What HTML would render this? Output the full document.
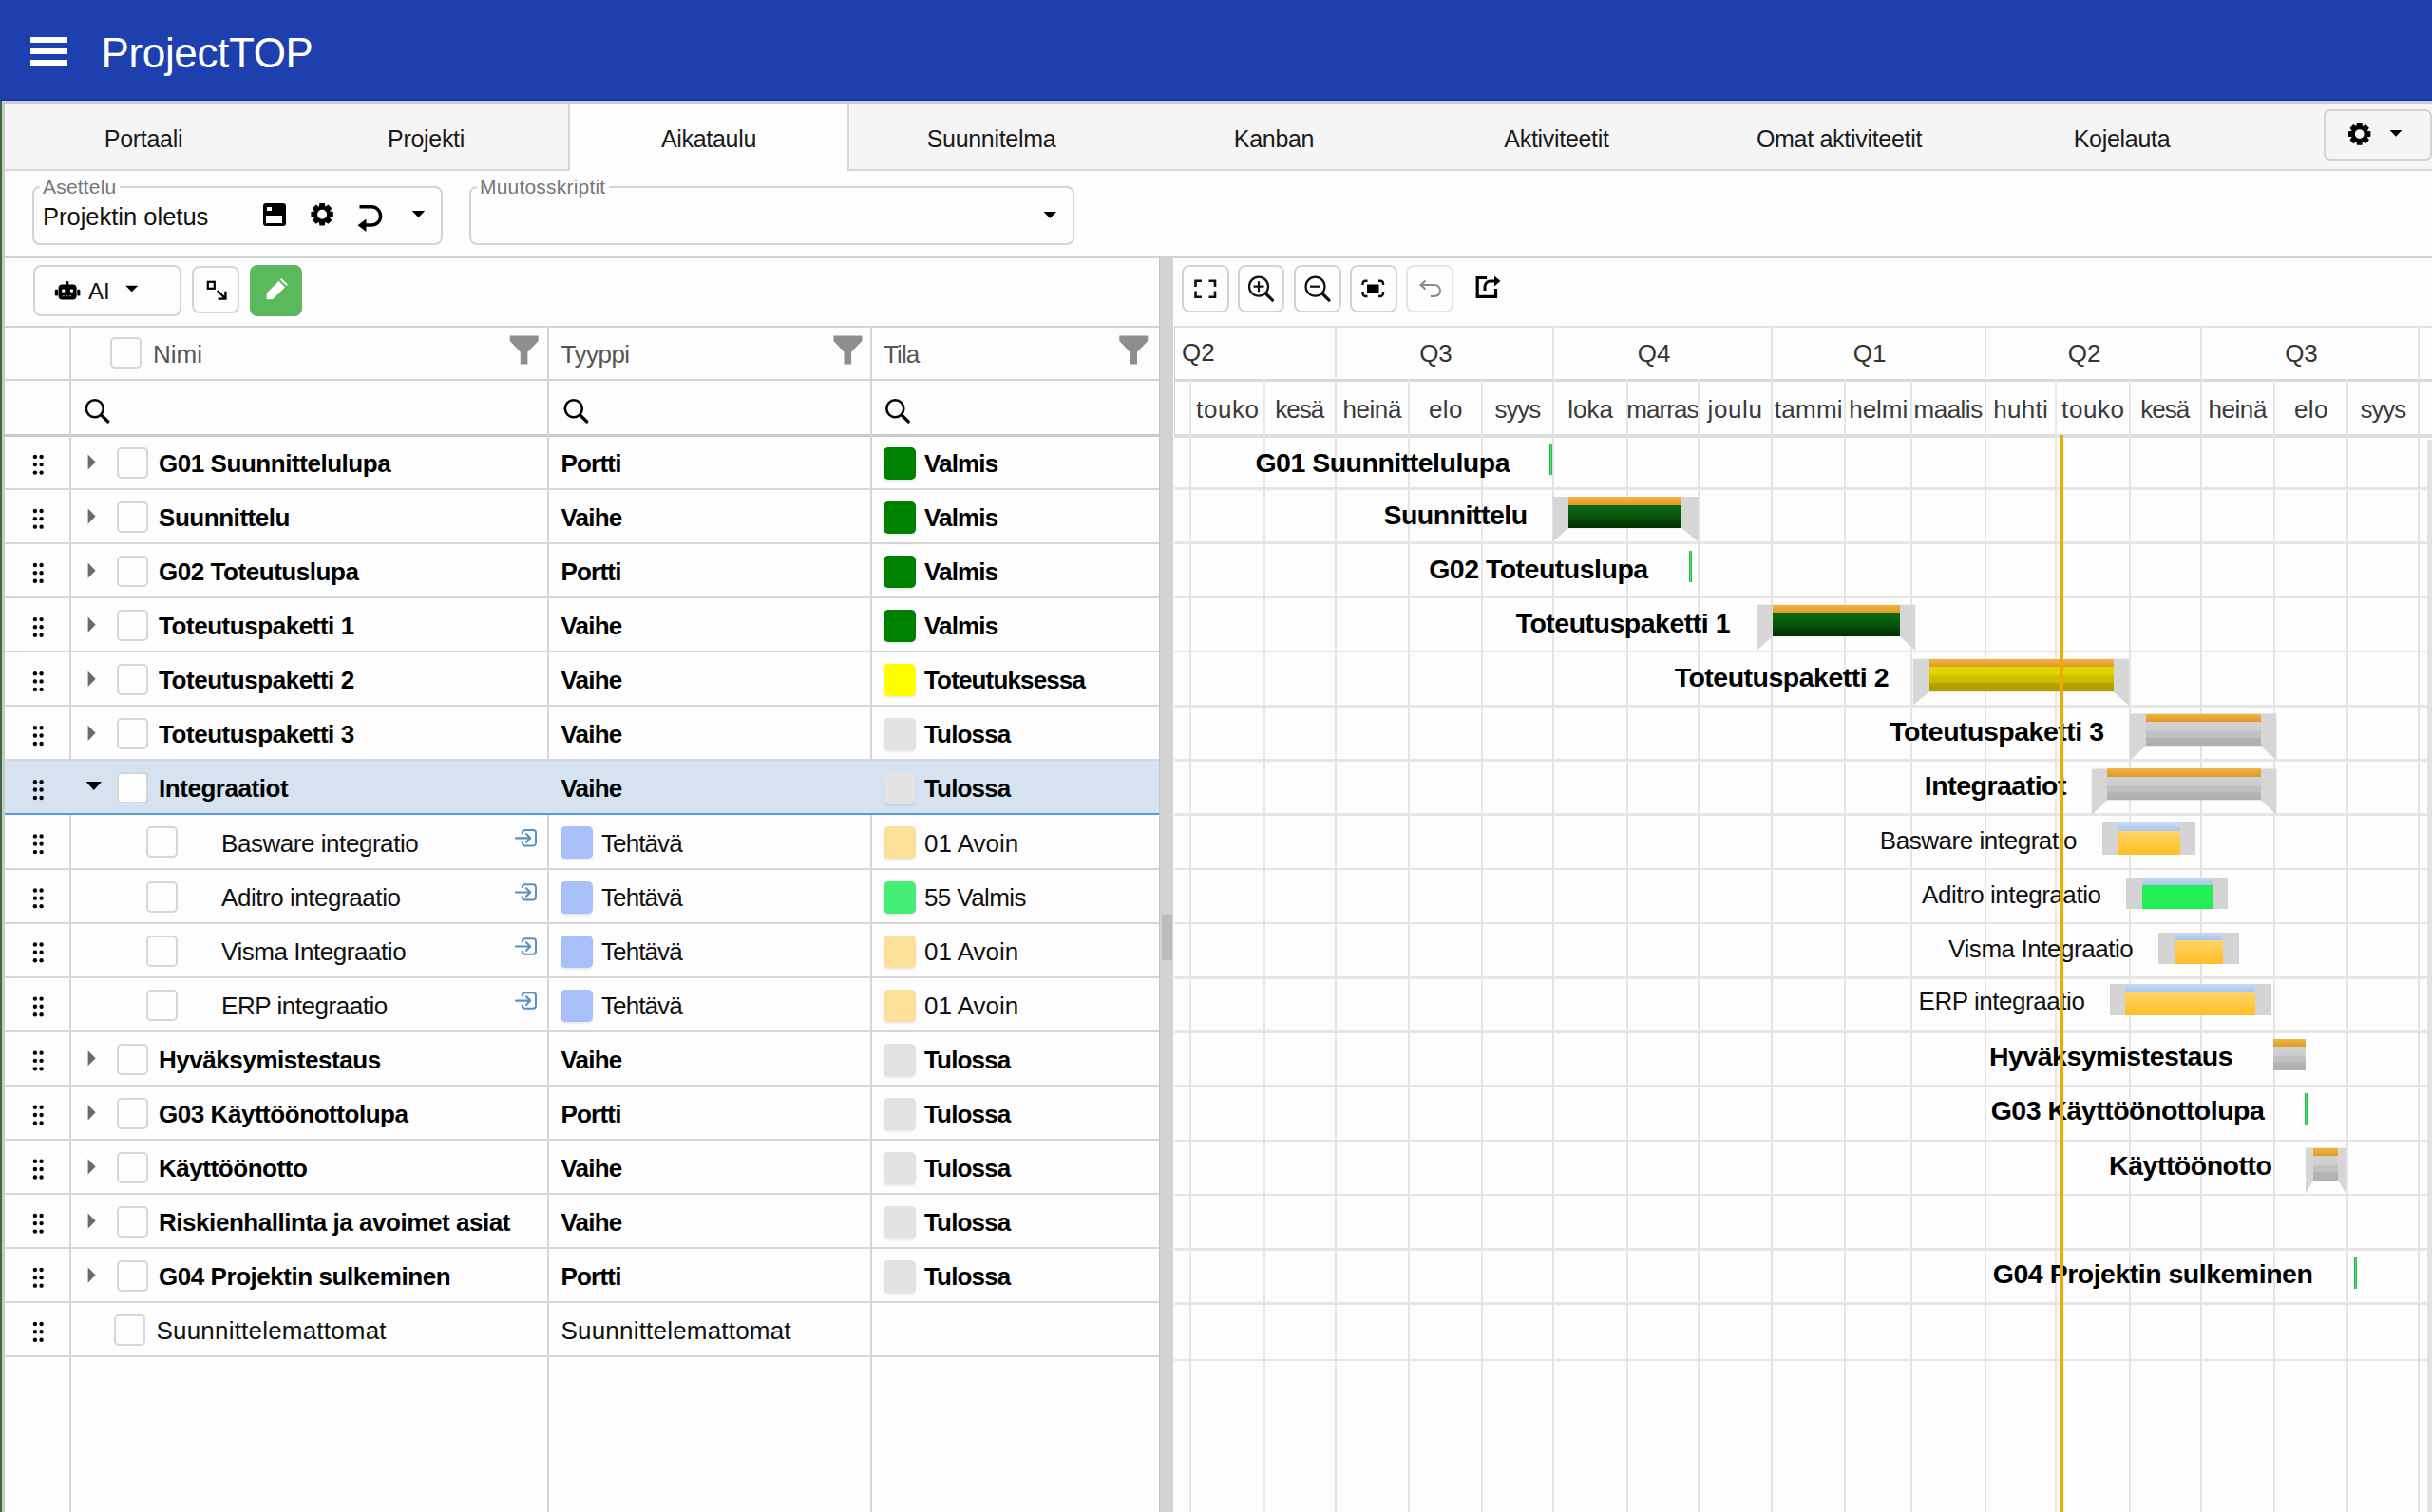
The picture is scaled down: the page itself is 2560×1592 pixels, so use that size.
<!DOCTYPE html>
<html><head><meta charset="utf-8"><title>ProjectTOP - Aikataulu</title>
<style>
html,body{margin:0;padding:0;}
body{width:2560px;height:1592px;position:relative;overflow:hidden;background:#fdfdfd;font-family:"Liberation Sans", sans-serif;}
svg{position:absolute;overflow:visible;}
</style></head><body>
<div style="position:absolute;left:0px;top:0px;width:2560px;height:106px;background:#1e40ae;"></div>
<div style="position:absolute;left:0px;top:105px;width:2560px;height:1px;background:#0b2fa6;"></div>
<div style="position:absolute;left:32px;top:39px;width:39px;height:5.5px;background:#fff;"></div>
<div style="position:absolute;left:32px;top:51px;width:39px;height:5.5px;background:#fff;"></div>
<div style="position:absolute;left:32px;top:63px;width:39px;height:5.5px;background:#fff;"></div>
<div style="position:absolute;left:106.50px;top:30.75px;font-size:44px;line-height:50.6px;font-weight:normal;color:#fff;letter-spacing:-0.35px;white-space:nowrap;">ProjectTOP</div>
<div style="position:absolute;left:0px;top:106px;width:1.5px;height:1486px;background:#3b6b42;"></div>
<div style="position:absolute;left:1.5px;top:106px;width:3px;height:1486px;background:#c9c9c9;"></div>
<div style="position:absolute;left:1.5px;top:106px;width:2560px;height:4px;background:linear-gradient(#cfcfcf,#c6c6c6);"></div>
<div style="position:absolute;left:4.5px;top:110px;width:2555.5px;height:68px;background:#f5f5f5;"></div>
<div style="position:absolute;left:4.5px;top:178px;width:2555.5px;height:2px;background:#d6d6d6;"></div>
<div style="position:absolute;left:598px;top:110px;width:296px;height:70px;background:#fdfdfd;border-left:2px solid #d6d6d6;border-right:2px solid #d6d6d6;box-sizing:border-box;"></div>
<div style="position:absolute;left:1.0px;top:131px;width:300px;text-align:center;font-size:25px;line-height:30px;color:#1a1a1a;letter-spacing:-0.3px;">Portaali</div>
<div style="position:absolute;left:298.5px;top:131px;width:300px;text-align:center;font-size:25px;line-height:30px;color:#1a1a1a;letter-spacing:-0.3px;">Projekti</div>
<div style="position:absolute;left:596.0px;top:131px;width:300px;text-align:center;font-size:25px;line-height:30px;color:#1a1a1a;letter-spacing:-0.3px;">Aikataulu</div>
<div style="position:absolute;left:893.5px;top:131px;width:300px;text-align:center;font-size:25px;line-height:30px;color:#1a1a1a;letter-spacing:-0.3px;">Suunnitelma</div>
<div style="position:absolute;left:1191.0px;top:131px;width:300px;text-align:center;font-size:25px;line-height:30px;color:#1a1a1a;letter-spacing:-0.3px;">Kanban</div>
<div style="position:absolute;left:1488.5px;top:131px;width:300px;text-align:center;font-size:25px;line-height:30px;color:#1a1a1a;letter-spacing:-0.3px;">Aktiviteetit</div>
<div style="position:absolute;left:1786.0px;top:131px;width:300px;text-align:center;font-size:25px;line-height:30px;color:#1a1a1a;letter-spacing:-0.3px;">Omat aktiviteetit</div>
<div style="position:absolute;left:2083.5px;top:131px;width:300px;text-align:center;font-size:25px;line-height:30px;color:#1a1a1a;letter-spacing:-0.3px;">Kojelauta</div>
<div style="position:absolute;left:2446px;top:115px;width:114px;height:54px;border:2px solid #d2d2d2;border-radius:7px;box-sizing:border-box;background:#f5f5f5;"></div>
<div style="position:absolute;left:34px;top:196px;width:432px;height:62px;border:2px solid #d4d4d4;border-radius:8px;box-sizing:border-box;"></div>
<div style="position:absolute;left:42px;top:190px;width:84px;height:12px;background:#fdfdfd;"></div>
<div style="position:absolute;left:45.00px;top:184.65px;font-size:21px;line-height:24.15px;font-weight:normal;color:#777;letter-spacing:0.2px;white-space:nowrap;">Asettelu</div>
<div style="position:absolute;left:45.00px;top:213.50px;font-size:25.5px;line-height:29.32px;font-weight:normal;color:#111;letter-spacing:0px;white-space:nowrap;">Projektin oletus</div>
<div style="position:absolute;left:494px;top:196px;width:637px;height:62px;border:2px solid #d4d4d4;border-radius:8px;box-sizing:border-box;"></div>
<div style="position:absolute;left:502px;top:190px;width:139px;height:12px;background:#fdfdfd;"></div>
<div style="position:absolute;left:505.00px;top:184.65px;font-size:21px;line-height:24.15px;font-weight:normal;color:#777;letter-spacing:0.2px;white-space:nowrap;">Muutosskriptit</div>
<div style="position:absolute;left:4.5px;top:270px;width:2555.5px;height:2px;background:#d4d4d4;"></div>
<div style="position:absolute;left:35px;top:278.5px;width:156px;height:54px;border:2px solid #d4d4d4;border-radius:8px;box-sizing:border-box;"></div>
<div style="position:absolute;left:93.00px;top:293.48px;font-size:24px;line-height:27.6px;font-weight:normal;color:#111;letter-spacing:0px;white-space:nowrap;">AI</div>
<div style="position:absolute;left:202px;top:280px;width:50px;height:50px;border:2px solid #d4d4d4;border-radius:8px;box-sizing:border-box;"></div>
<div style="position:absolute;left:263px;top:278.5px;width:54.5px;height:54px;background:#5cb85c;border-radius:8px;"></div>
<div style="position:absolute;left:1219.5px;top:271px;width:15px;height:1321px;background:#d3d3d3;border-left:1px solid #c4c4c4;box-sizing:border-box;"></div>
<div style="position:absolute;left:1244px;top:278.7px;width:49.5px;height:50px;border:2px solid #d4d4d4;border-radius:8px;box-sizing:border-box;"></div>
<div style="position:absolute;left:1302.7px;top:278.7px;width:49.5px;height:50px;border:2px solid #d4d4d4;border-radius:8px;box-sizing:border-box;"></div>
<div style="position:absolute;left:1362px;top:278.7px;width:49.5px;height:50px;border:2px solid #d4d4d4;border-radius:8px;box-sizing:border-box;"></div>
<div style="position:absolute;left:1421px;top:278.7px;width:49.5px;height:50px;border:2px solid #d4d4d4;border-radius:8px;box-sizing:border-box;"></div>
<div style="position:absolute;left:1480px;top:278.7px;width:49.5px;height:50px;border:2px solid #e6e6e6;border-radius:8px;box-sizing:border-box;"></div>
<div style="position:absolute;left:4.5px;top:342.5px;width:1215.0px;height:2px;background:#d4d4d4;"></div>
<div style="position:absolute;left:4.5px;top:399px;width:1215.0px;height:2px;background:#d4d4d4;"></div>
<div style="position:absolute;left:4.5px;top:457px;width:1215.0px;height:3px;background:#c9c9c9;"></div>
<div style="position:absolute;left:73px;top:343px;width:2px;height:1249px;background:#d6d6d6;"></div>
<div style="position:absolute;left:576px;top:343px;width:2px;height:1249px;background:#d6d6d6;"></div>
<div style="position:absolute;left:916px;top:343px;width:2px;height:1249px;background:#d6d6d6;"></div>
<div style="position:absolute;left:116px;top:355px;width:33px;height:33px;border:2px solid #d6d6d6;border-radius:5px;box-sizing:border-box;background:#fdfdfd;"></div>
<div style="position:absolute;left:161.00px;top:358.54px;font-size:26px;line-height:29.9px;font-weight:normal;color:#555;letter-spacing:0px;white-space:nowrap;">Nimi</div>
<div style="position:absolute;left:590.50px;top:358.54px;font-size:26px;line-height:29.9px;font-weight:normal;color:#555;letter-spacing:-0.5px;white-space:nowrap;">Tyyppi</div>
<div style="position:absolute;left:930.00px;top:358.54px;font-size:26px;line-height:29.9px;font-weight:normal;color:#555;letter-spacing:-0.9px;white-space:nowrap;">Tila</div>
<div style="position:absolute;left:4.5px;top:514.07px;width:1215.0px;height:2px;background:#d6d6d6;"></div>
<div style="position:absolute;left:123px;top:471.0px;width:33px;height:33px;border:2px solid #d6d6d6;border-radius:5px;box-sizing:border-box;background:#fdfdfd;"></div>
<div style="position:absolute;left:167.00px;top:474.04px;font-size:26px;line-height:29.9px;font-weight:bold;color:#000;letter-spacing:-0.45px;white-space:nowrap;">G01 Suunnittelulupa</div>
<div style="position:absolute;left:590.50px;top:474.04px;font-size:26px;line-height:29.9px;font-weight:bold;color:#000;letter-spacing:-0.8px;white-space:nowrap;">Portti</div>
<div style="position:absolute;left:930px;top:471.0px;width:34px;height:34px;background:#008000;border-radius:5px;box-shadow:0 2px 2px rgba(0,0,0,0.08);"></div>
<div style="position:absolute;left:973.00px;top:474.04px;font-size:26px;line-height:29.9px;font-weight:bold;color:#000;letter-spacing:-0.85px;white-space:nowrap;">Valmis</div>
<div style="position:absolute;left:4.5px;top:571.1400000000001px;width:1215.0px;height:2px;background:#d6d6d6;"></div>
<div style="position:absolute;left:123px;top:528.07px;width:33px;height:33px;border:2px solid #d6d6d6;border-radius:5px;box-sizing:border-box;background:#fdfdfd;"></div>
<div style="position:absolute;left:167.00px;top:531.11px;font-size:26px;line-height:29.9px;font-weight:bold;color:#000;letter-spacing:-0.45px;white-space:nowrap;">Suunnittelu</div>
<div style="position:absolute;left:590.50px;top:531.11px;font-size:26px;line-height:29.9px;font-weight:bold;color:#000;letter-spacing:-0.8px;white-space:nowrap;">Vaihe</div>
<div style="position:absolute;left:930px;top:528.07px;width:34px;height:34px;background:#008000;border-radius:5px;box-shadow:0 2px 2px rgba(0,0,0,0.08);"></div>
<div style="position:absolute;left:973.00px;top:531.11px;font-size:26px;line-height:29.9px;font-weight:bold;color:#000;letter-spacing:-0.85px;white-space:nowrap;">Valmis</div>
<div style="position:absolute;left:4.5px;top:628.21px;width:1215.0px;height:2px;background:#d6d6d6;"></div>
<div style="position:absolute;left:123px;top:585.14px;width:33px;height:33px;border:2px solid #d6d6d6;border-radius:5px;box-sizing:border-box;background:#fdfdfd;"></div>
<div style="position:absolute;left:167.00px;top:588.18px;font-size:26px;line-height:29.9px;font-weight:bold;color:#000;letter-spacing:-0.45px;white-space:nowrap;">G02 Toteutuslupa</div>
<div style="position:absolute;left:590.50px;top:588.18px;font-size:26px;line-height:29.9px;font-weight:bold;color:#000;letter-spacing:-0.8px;white-space:nowrap;">Portti</div>
<div style="position:absolute;left:930px;top:585.14px;width:34px;height:34px;background:#008000;border-radius:5px;box-shadow:0 2px 2px rgba(0,0,0,0.08);"></div>
<div style="position:absolute;left:973.00px;top:588.18px;font-size:26px;line-height:29.9px;font-weight:bold;color:#000;letter-spacing:-0.85px;white-space:nowrap;">Valmis</div>
<div style="position:absolute;left:4.5px;top:685.2800000000001px;width:1215.0px;height:2px;background:#d6d6d6;"></div>
<div style="position:absolute;left:123px;top:642.21px;width:33px;height:33px;border:2px solid #d6d6d6;border-radius:5px;box-sizing:border-box;background:#fdfdfd;"></div>
<div style="position:absolute;left:167.00px;top:645.25px;font-size:26px;line-height:29.9px;font-weight:bold;color:#000;letter-spacing:-0.45px;white-space:nowrap;">Toteutuspaketti 1</div>
<div style="position:absolute;left:590.50px;top:645.25px;font-size:26px;line-height:29.9px;font-weight:bold;color:#000;letter-spacing:-0.8px;white-space:nowrap;">Vaihe</div>
<div style="position:absolute;left:930px;top:642.21px;width:34px;height:34px;background:#008000;border-radius:5px;box-shadow:0 2px 2px rgba(0,0,0,0.08);"></div>
<div style="position:absolute;left:973.00px;top:645.25px;font-size:26px;line-height:29.9px;font-weight:bold;color:#000;letter-spacing:-0.85px;white-space:nowrap;">Valmis</div>
<div style="position:absolute;left:4.5px;top:742.35px;width:1215.0px;height:2px;background:#d6d6d6;"></div>
<div style="position:absolute;left:123px;top:699.28px;width:33px;height:33px;border:2px solid #d6d6d6;border-radius:5px;box-sizing:border-box;background:#fdfdfd;"></div>
<div style="position:absolute;left:167.00px;top:702.32px;font-size:26px;line-height:29.9px;font-weight:bold;color:#000;letter-spacing:-0.45px;white-space:nowrap;">Toteutuspaketti 2</div>
<div style="position:absolute;left:590.50px;top:702.32px;font-size:26px;line-height:29.9px;font-weight:bold;color:#000;letter-spacing:-0.8px;white-space:nowrap;">Vaihe</div>
<div style="position:absolute;left:930px;top:699.28px;width:34px;height:34px;background:#ffff00;border-radius:5px;box-shadow:0 2px 2px rgba(0,0,0,0.08);"></div>
<div style="position:absolute;left:973.00px;top:702.32px;font-size:26px;line-height:29.9px;font-weight:bold;color:#000;letter-spacing:-0.85px;white-space:nowrap;">Toteutuksessa</div>
<div style="position:absolute;left:4.5px;top:799.4200000000001px;width:1215.0px;height:2px;background:#d6d6d6;"></div>
<div style="position:absolute;left:123px;top:756.35px;width:33px;height:33px;border:2px solid #d6d6d6;border-radius:5px;box-sizing:border-box;background:#fdfdfd;"></div>
<div style="position:absolute;left:167.00px;top:759.39px;font-size:26px;line-height:29.9px;font-weight:bold;color:#000;letter-spacing:-0.45px;white-space:nowrap;">Toteutuspaketti 3</div>
<div style="position:absolute;left:590.50px;top:759.39px;font-size:26px;line-height:29.9px;font-weight:bold;color:#000;letter-spacing:-0.8px;white-space:nowrap;">Vaihe</div>
<div style="position:absolute;left:930px;top:756.35px;width:34px;height:34px;background:#e2e2e2;border-radius:5px;box-shadow:0 2px 2px rgba(0,0,0,0.08);"></div>
<div style="position:absolute;left:973.00px;top:759.39px;font-size:26px;line-height:29.9px;font-weight:bold;color:#000;letter-spacing:-0.85px;white-space:nowrap;">Tulossa</div>
<div style="position:absolute;left:4.5px;top:801.4200000000001px;width:1215.0px;height:56.07px;background:#d5e3f1;"></div>
<div style="position:absolute;left:4.5px;top:856.4900000000001px;width:1215.0px;height:2px;background:#5b9bd5;"></div>
<div style="position:absolute;left:123px;top:813.4200000000001px;width:33px;height:33px;border:2px solid #d6d6d6;border-radius:5px;box-sizing:border-box;background:#fdfdfd;"></div>
<div style="position:absolute;left:167.00px;top:816.46px;font-size:26px;line-height:29.9px;font-weight:bold;color:#000;letter-spacing:-0.45px;white-space:nowrap;">Integraatiot</div>
<div style="position:absolute;left:590.50px;top:816.46px;font-size:26px;line-height:29.9px;font-weight:bold;color:#000;letter-spacing:-0.8px;white-space:nowrap;">Vaihe</div>
<div style="position:absolute;left:930px;top:813.4200000000001px;width:34px;height:34px;background:#e2e2e2;border-radius:5px;box-shadow:0 2px 2px rgba(0,0,0,0.08);"></div>
<div style="position:absolute;left:973.00px;top:816.46px;font-size:26px;line-height:29.9px;font-weight:bold;color:#000;letter-spacing:-0.85px;white-space:nowrap;">Tulossa</div>
<div style="position:absolute;left:4.5px;top:913.5600000000001px;width:1215.0px;height:2px;background:#d6d6d6;"></div>
<div style="position:absolute;left:154px;top:870.49px;width:33px;height:33px;border:2px solid #d6d6d6;border-radius:5px;box-sizing:border-box;background:#fdfdfd;"></div>
<div style="position:absolute;left:233.00px;top:873.53px;font-size:26px;line-height:29.9px;font-weight:normal;color:#111;letter-spacing:-0.45px;white-space:nowrap;">Basware integratio</div>
<div style="position:absolute;left:590px;top:870.49px;width:34px;height:34px;background:#a8bffa;border-radius:5px;box-shadow:0 2px 2px rgba(0,0,0,0.08);"></div>
<div style="position:absolute;left:633.00px;top:873.53px;font-size:26px;line-height:29.9px;font-weight:normal;color:#111;letter-spacing:-0.9px;white-space:nowrap;">Tehtävä</div>
<div style="position:absolute;left:930px;top:870.49px;width:34px;height:34px;background:#fce09a;border-radius:5px;box-shadow:0 2px 2px rgba(0,0,0,0.08);"></div>
<div style="position:absolute;left:973.00px;top:873.53px;font-size:26px;line-height:29.9px;font-weight:normal;color:#111;letter-spacing:0px;white-space:nowrap;">01 Avoin</div>
<div style="position:absolute;left:4.5px;top:970.63px;width:1215.0px;height:2px;background:#d6d6d6;"></div>
<div style="position:absolute;left:154px;top:927.56px;width:33px;height:33px;border:2px solid #d6d6d6;border-radius:5px;box-sizing:border-box;background:#fdfdfd;"></div>
<div style="position:absolute;left:233.00px;top:930.60px;font-size:26px;line-height:29.9px;font-weight:normal;color:#111;letter-spacing:-0.45px;white-space:nowrap;">Aditro integraatio</div>
<div style="position:absolute;left:590px;top:927.56px;width:34px;height:34px;background:#a8bffa;border-radius:5px;box-shadow:0 2px 2px rgba(0,0,0,0.08);"></div>
<div style="position:absolute;left:633.00px;top:930.60px;font-size:26px;line-height:29.9px;font-weight:normal;color:#111;letter-spacing:-0.9px;white-space:nowrap;">Tehtävä</div>
<div style="position:absolute;left:930px;top:927.56px;width:34px;height:34px;background:#44ee77;border-radius:5px;box-shadow:0 2px 2px rgba(0,0,0,0.08);"></div>
<div style="position:absolute;left:973.00px;top:930.60px;font-size:26px;line-height:29.9px;font-weight:normal;color:#111;letter-spacing:-0.6px;white-space:nowrap;">55 Valmis</div>
<div style="position:absolute;left:4.5px;top:1027.7px;width:1215.0px;height:2px;background:#d6d6d6;"></div>
<div style="position:absolute;left:154px;top:984.63px;width:33px;height:33px;border:2px solid #d6d6d6;border-radius:5px;box-sizing:border-box;background:#fdfdfd;"></div>
<div style="position:absolute;left:233.00px;top:987.67px;font-size:26px;line-height:29.9px;font-weight:normal;color:#111;letter-spacing:-0.45px;white-space:nowrap;">Visma Integraatio</div>
<div style="position:absolute;left:590px;top:984.63px;width:34px;height:34px;background:#a8bffa;border-radius:5px;box-shadow:0 2px 2px rgba(0,0,0,0.08);"></div>
<div style="position:absolute;left:633.00px;top:987.67px;font-size:26px;line-height:29.9px;font-weight:normal;color:#111;letter-spacing:-0.9px;white-space:nowrap;">Tehtävä</div>
<div style="position:absolute;left:930px;top:984.63px;width:34px;height:34px;background:#fce09a;border-radius:5px;box-shadow:0 2px 2px rgba(0,0,0,0.08);"></div>
<div style="position:absolute;left:973.00px;top:987.67px;font-size:26px;line-height:29.9px;font-weight:normal;color:#111;letter-spacing:0px;white-space:nowrap;">01 Avoin</div>
<div style="position:absolute;left:4.5px;top:1084.77px;width:1215.0px;height:2px;background:#d6d6d6;"></div>
<div style="position:absolute;left:154px;top:1041.7px;width:33px;height:33px;border:2px solid #d6d6d6;border-radius:5px;box-sizing:border-box;background:#fdfdfd;"></div>
<div style="position:absolute;left:233.00px;top:1044.74px;font-size:26px;line-height:29.9px;font-weight:normal;color:#111;letter-spacing:-0.45px;white-space:nowrap;">ERP integraatio</div>
<div style="position:absolute;left:590px;top:1041.7px;width:34px;height:34px;background:#a8bffa;border-radius:5px;box-shadow:0 2px 2px rgba(0,0,0,0.08);"></div>
<div style="position:absolute;left:633.00px;top:1044.74px;font-size:26px;line-height:29.9px;font-weight:normal;color:#111;letter-spacing:-0.9px;white-space:nowrap;">Tehtävä</div>
<div style="position:absolute;left:930px;top:1041.7px;width:34px;height:34px;background:#fce09a;border-radius:5px;box-shadow:0 2px 2px rgba(0,0,0,0.08);"></div>
<div style="position:absolute;left:973.00px;top:1044.74px;font-size:26px;line-height:29.9px;font-weight:normal;color:#111;letter-spacing:0px;white-space:nowrap;">01 Avoin</div>
<div style="position:absolute;left:4.5px;top:1141.84px;width:1215.0px;height:2px;background:#d6d6d6;"></div>
<div style="position:absolute;left:123px;top:1098.77px;width:33px;height:33px;border:2px solid #d6d6d6;border-radius:5px;box-sizing:border-box;background:#fdfdfd;"></div>
<div style="position:absolute;left:167.00px;top:1101.81px;font-size:26px;line-height:29.9px;font-weight:bold;color:#000;letter-spacing:-0.45px;white-space:nowrap;">Hyväksymistestaus</div>
<div style="position:absolute;left:590.50px;top:1101.81px;font-size:26px;line-height:29.9px;font-weight:bold;color:#000;letter-spacing:-0.8px;white-space:nowrap;">Vaihe</div>
<div style="position:absolute;left:930px;top:1098.77px;width:34px;height:34px;background:#e2e2e2;border-radius:5px;box-shadow:0 2px 2px rgba(0,0,0,0.08);"></div>
<div style="position:absolute;left:973.00px;top:1101.81px;font-size:26px;line-height:29.9px;font-weight:bold;color:#000;letter-spacing:-0.85px;white-space:nowrap;">Tulossa</div>
<div style="position:absolute;left:4.5px;top:1198.91px;width:1215.0px;height:2px;background:#d6d6d6;"></div>
<div style="position:absolute;left:123px;top:1155.8400000000001px;width:33px;height:33px;border:2px solid #d6d6d6;border-radius:5px;box-sizing:border-box;background:#fdfdfd;"></div>
<div style="position:absolute;left:167.00px;top:1158.88px;font-size:26px;line-height:29.9px;font-weight:bold;color:#000;letter-spacing:-0.45px;white-space:nowrap;">G03 Käyttöönottolupa</div>
<div style="position:absolute;left:590.50px;top:1158.88px;font-size:26px;line-height:29.9px;font-weight:bold;color:#000;letter-spacing:-0.8px;white-space:nowrap;">Portti</div>
<div style="position:absolute;left:930px;top:1155.8400000000001px;width:34px;height:34px;background:#e2e2e2;border-radius:5px;box-shadow:0 2px 2px rgba(0,0,0,0.08);"></div>
<div style="position:absolute;left:973.00px;top:1158.88px;font-size:26px;line-height:29.9px;font-weight:bold;color:#000;letter-spacing:-0.85px;white-space:nowrap;">Tulossa</div>
<div style="position:absolute;left:4.5px;top:1255.9799999999998px;width:1215.0px;height:2px;background:#d6d6d6;"></div>
<div style="position:absolute;left:123px;top:1212.9099999999999px;width:33px;height:33px;border:2px solid #d6d6d6;border-radius:5px;box-sizing:border-box;background:#fdfdfd;"></div>
<div style="position:absolute;left:167.00px;top:1215.95px;font-size:26px;line-height:29.9px;font-weight:bold;color:#000;letter-spacing:-0.45px;white-space:nowrap;">Käyttöönotto</div>
<div style="position:absolute;left:590.50px;top:1215.95px;font-size:26px;line-height:29.9px;font-weight:bold;color:#000;letter-spacing:-0.8px;white-space:nowrap;">Vaihe</div>
<div style="position:absolute;left:930px;top:1212.9099999999999px;width:34px;height:34px;background:#e2e2e2;border-radius:5px;box-shadow:0 2px 2px rgba(0,0,0,0.08);"></div>
<div style="position:absolute;left:973.00px;top:1215.95px;font-size:26px;line-height:29.9px;font-weight:bold;color:#000;letter-spacing:-0.85px;white-space:nowrap;">Tulossa</div>
<div style="position:absolute;left:4.5px;top:1313.05px;width:1215.0px;height:2px;background:#d6d6d6;"></div>
<div style="position:absolute;left:123px;top:1269.98px;width:33px;height:33px;border:2px solid #d6d6d6;border-radius:5px;box-sizing:border-box;background:#fdfdfd;"></div>
<div style="position:absolute;left:167.00px;top:1273.02px;font-size:26px;line-height:29.9px;font-weight:bold;color:#000;letter-spacing:-0.45px;white-space:nowrap;">Riskienhallinta ja avoimet asiat</div>
<div style="position:absolute;left:590.50px;top:1273.02px;font-size:26px;line-height:29.9px;font-weight:bold;color:#000;letter-spacing:-0.8px;white-space:nowrap;">Vaihe</div>
<div style="position:absolute;left:930px;top:1269.98px;width:34px;height:34px;background:#e2e2e2;border-radius:5px;box-shadow:0 2px 2px rgba(0,0,0,0.08);"></div>
<div style="position:absolute;left:973.00px;top:1273.02px;font-size:26px;line-height:29.9px;font-weight:bold;color:#000;letter-spacing:-0.85px;white-space:nowrap;">Tulossa</div>
<div style="position:absolute;left:4.5px;top:1370.12px;width:1215.0px;height:2px;background:#d6d6d6;"></div>
<div style="position:absolute;left:123px;top:1327.05px;width:33px;height:33px;border:2px solid #d6d6d6;border-radius:5px;box-sizing:border-box;background:#fdfdfd;"></div>
<div style="position:absolute;left:167.00px;top:1330.09px;font-size:26px;line-height:29.9px;font-weight:bold;color:#000;letter-spacing:-0.45px;white-space:nowrap;">G04 Projektin sulkeminen</div>
<div style="position:absolute;left:590.50px;top:1330.09px;font-size:26px;line-height:29.9px;font-weight:bold;color:#000;letter-spacing:-0.8px;white-space:nowrap;">Portti</div>
<div style="position:absolute;left:930px;top:1327.05px;width:34px;height:34px;background:#e2e2e2;border-radius:5px;box-shadow:0 2px 2px rgba(0,0,0,0.08);"></div>
<div style="position:absolute;left:973.00px;top:1330.09px;font-size:26px;line-height:29.9px;font-weight:bold;color:#000;letter-spacing:-0.85px;white-space:nowrap;">Tulossa</div>
<div style="position:absolute;left:4.5px;top:1427.1899999999998px;width:1215.0px;height:2px;background:#d6d6d6;"></div>
<div style="position:absolute;left:120px;top:1384.12px;width:33px;height:33px;border:2px solid #d6d6d6;border-radius:5px;box-sizing:border-box;background:#fdfdfd;"></div>
<div style="position:absolute;left:164.50px;top:1387.16px;font-size:26px;line-height:29.9px;font-weight:normal;color:#111;letter-spacing:0.2px;white-space:nowrap;">Suunnittelemattomat</div>
<div style="position:absolute;left:590.50px;top:1387.16px;font-size:26px;line-height:29.9px;font-weight:normal;color:#111;letter-spacing:0.2px;white-space:nowrap;">Suunnittelemattomat</div>
<div style="position:absolute;left:1236px;top:342.5px;width:1324px;height:2px;background:#e0e0e0;"></div>
<div style="position:absolute;left:1236px;top:399px;width:1324px;height:2.5px;background:#d9d9d9;"></div>
<div style="position:absolute;left:1236px;top:457px;width:1324px;height:3.5px;background:#dedede;"></div>
<div style="position:absolute;left:1235.5px;top:343px;width:1.5px;height:115px;background:#cfcfcf;"></div>
<div style="position:absolute;left:1252.4px;top:400px;width:2px;height:1192px;background:#e6e6e6;"></div>
<div style="position:absolute;left:1253.7px;top:416px;width:77.4px;text-align:center;font-size:26px;line-height:30px;color:#3a3a3a;letter-spacing:0.6px;white-space:nowrap;">touko</div>
<div style="position:absolute;left:1329.776px;top:400px;width:2px;height:1192px;background:#e6e6e6;"></div>
<div style="position:absolute;left:1330.3px;top:416px;width:74.9px;text-align:center;font-size:26px;line-height:30px;color:#3a3a3a;letter-spacing:-1px;white-space:nowrap;">kesä</div>
<div style="position:absolute;left:1404.6560000000002px;top:343px;width:2px;height:1249px;background:#e3e3e3;"></div>
<div style="position:absolute;left:1405.5px;top:416px;width:77.4px;text-align:center;font-size:26px;line-height:30px;color:#3a3a3a;letter-spacing:-0.4px;white-space:nowrap;">heinä</div>
<div style="position:absolute;left:1482.0320000000002px;top:400px;width:2px;height:1192px;background:#e6e6e6;"></div>
<div style="position:absolute;left:1483.2px;top:416px;width:77.4px;text-align:center;font-size:26px;line-height:30px;color:#3a3a3a;letter-spacing:0.3px;white-space:nowrap;">elo</div>
<div style="position:absolute;left:1559.4080000000001px;top:400px;width:2px;height:1192px;background:#e6e6e6;"></div>
<div style="position:absolute;left:1559.9px;top:416px;width:74.9px;text-align:center;font-size:26px;line-height:30px;color:#3a3a3a;letter-spacing:-1.1px;white-space:nowrap;">syys</div>
<div style="position:absolute;left:1634.288px;top:343px;width:2px;height:1249px;background:#e3e3e3;"></div>
<div style="position:absolute;left:1635.3px;top:416px;width:77.4px;text-align:center;font-size:26px;line-height:30px;color:#3a3a3a;letter-spacing:0px;white-space:nowrap;">loka</div>
<div style="position:absolute;left:1711.6640000000002px;top:400px;width:2px;height:1192px;background:#e6e6e6;"></div>
<div style="position:absolute;left:1712.2px;top:416px;width:74.9px;text-align:center;font-size:26px;line-height:30px;color:#3a3a3a;letter-spacing:-0.9px;white-space:nowrap;">marras</div>
<div style="position:absolute;left:1786.544px;top:400px;width:2px;height:1192px;background:#e6e6e6;"></div>
<div style="position:absolute;left:1787.8px;top:416px;width:77.4px;text-align:center;font-size:26px;line-height:30px;color:#3a3a3a;letter-spacing:0.6px;white-space:nowrap;">joulu</div>
<div style="position:absolute;left:1863.92px;top:343px;width:2px;height:1249px;background:#e3e3e3;"></div>
<div style="position:absolute;left:1865.1px;top:416px;width:77.4px;text-align:center;font-size:26px;line-height:30px;color:#3a3a3a;letter-spacing:0.3px;white-space:nowrap;">tammi</div>
<div style="position:absolute;left:1941.296px;top:400px;width:2px;height:1192px;background:#e6e6e6;"></div>
<div style="position:absolute;left:1942.3px;top:416px;width:69.9px;text-align:center;font-size:26px;line-height:30px;color:#3a3a3a;letter-spacing:0px;white-space:nowrap;">helmi</div>
<div style="position:absolute;left:2011.1840000000002px;top:400px;width:2px;height:1192px;background:#e6e6e6;"></div>
<div style="position:absolute;left:2011.9px;top:416px;width:77.4px;text-align:center;font-size:26px;line-height:30px;color:#3a3a3a;letter-spacing:-0.5px;white-space:nowrap;">maalis</div>
<div style="position:absolute;left:2088.56px;top:343px;width:2px;height:1249px;background:#e3e3e3;"></div>
<div style="position:absolute;left:2089.7px;top:416px;width:74.9px;text-align:center;font-size:26px;line-height:30px;color:#3a3a3a;letter-spacing:0.3px;white-space:nowrap;">huhti</div>
<div style="position:absolute;left:2163.44px;top:400px;width:2px;height:1192px;background:#e6e6e6;"></div>
<div style="position:absolute;left:2164.7px;top:416px;width:77.4px;text-align:center;font-size:26px;line-height:30px;color:#3a3a3a;letter-spacing:0.6px;white-space:nowrap;">touko</div>
<div style="position:absolute;left:2240.8160000000003px;top:400px;width:2px;height:1192px;background:#e6e6e6;"></div>
<div style="position:absolute;left:2241.3px;top:416px;width:74.9px;text-align:center;font-size:26px;line-height:30px;color:#3a3a3a;letter-spacing:-1px;white-space:nowrap;">kesä</div>
<div style="position:absolute;left:2315.696px;top:343px;width:2px;height:1249px;background:#e3e3e3;"></div>
<div style="position:absolute;left:2316.5px;top:416px;width:77.4px;text-align:center;font-size:26px;line-height:30px;color:#3a3a3a;letter-spacing:-0.4px;white-space:nowrap;">heinä</div>
<div style="position:absolute;left:2393.072px;top:400px;width:2px;height:1192px;background:#e6e6e6;"></div>
<div style="position:absolute;left:2394.2px;top:416px;width:77.4px;text-align:center;font-size:26px;line-height:30px;color:#3a3a3a;letter-spacing:0.3px;white-space:nowrap;">elo</div>
<div style="position:absolute;left:2470.4480000000003px;top:400px;width:2px;height:1192px;background:#e6e6e6;"></div>
<div style="position:absolute;left:2470.9px;top:416px;width:74.9px;text-align:center;font-size:26px;line-height:30px;color:#3a3a3a;letter-spacing:-1.1px;white-space:nowrap;">syys</div>
<div style="position:absolute;left:2545.3280000000004px;top:343px;width:2px;height:1249px;background:#e3e3e3;"></div>
<div style="position:absolute;left:1396.7px;top:357px;width:229.6px;text-align:center;font-size:26px;line-height:30px;color:#333;">Q3</div>
<div style="position:absolute;left:1626.3px;top:357px;width:229.6px;text-align:center;font-size:26px;line-height:30px;color:#333;">Q4</div>
<div style="position:absolute;left:1855.9px;top:357px;width:224.6px;text-align:center;font-size:26px;line-height:30px;color:#333;">Q1</div>
<div style="position:absolute;left:2080.6px;top:357px;width:227.1px;text-align:center;font-size:26px;line-height:30px;color:#333;">Q2</div>
<div style="position:absolute;left:2307.7px;top:357px;width:229.6px;text-align:center;font-size:26px;line-height:30px;color:#333;">Q3</div>
<div style="position:absolute;left:1244.00px;top:357.04px;font-size:26px;line-height:29.9px;font-weight:normal;color:#333;letter-spacing:0px;white-space:nowrap;">Q2</div>
<div style="position:absolute;left:1236px;top:513.25px;width:1324px;height:2.5px;background:#e6e6e6;"></div>
<div style="position:absolute;left:1236px;top:570.45px;width:1324px;height:2.5px;background:#e6e6e6;"></div>
<div style="position:absolute;left:1236px;top:627.65px;width:1324px;height:2.5px;background:#e6e6e6;"></div>
<div style="position:absolute;left:1236px;top:684.85px;width:1324px;height:2.5px;background:#e6e6e6;"></div>
<div style="position:absolute;left:1236px;top:742.05px;width:1324px;height:2.5px;background:#e6e6e6;"></div>
<div style="position:absolute;left:1236px;top:799.25px;width:1324px;height:2.5px;background:#e6e6e6;"></div>
<div style="position:absolute;left:1236px;top:856.45px;width:1324px;height:2.5px;background:#e6e6e6;"></div>
<div style="position:absolute;left:1236px;top:913.6500000000001px;width:1324px;height:2.5px;background:#e6e6e6;"></div>
<div style="position:absolute;left:1236px;top:970.85px;width:1324px;height:2.5px;background:#e6e6e6;"></div>
<div style="position:absolute;left:1236px;top:1028.0500000000002px;width:1324px;height:2.5px;background:#e6e6e6;"></div>
<div style="position:absolute;left:1236px;top:1085.25px;width:1324px;height:2.5px;background:#e6e6e6;"></div>
<div style="position:absolute;left:1236px;top:1142.45px;width:1324px;height:2.5px;background:#e6e6e6;"></div>
<div style="position:absolute;left:1236px;top:1199.65px;width:1324px;height:2.5px;background:#e6e6e6;"></div>
<div style="position:absolute;left:1236px;top:1256.85px;width:1324px;height:2.5px;background:#e6e6e6;"></div>
<div style="position:absolute;left:1236px;top:1314.0500000000002px;width:1324px;height:2.5px;background:#e6e6e6;"></div>
<div style="position:absolute;left:1236px;top:1371.25px;width:1324px;height:2.5px;background:#e6e6e6;"></div>
<div style="position:absolute;left:1236px;top:1430.75px;width:1324px;height:2.5px;background:#e6e6e6;"></div>
<div style="position:absolute;left:2554.5px;top:463px;width:5.5px;height:1129px;background:#e2e2e2;"></div>
<div style="position:absolute;left:1630.8px;top:467.4px;width:3px;height:32.60000000000002px;background:linear-gradient(90deg,#2a8a3a,#40ee66 50%,#2aa04a);"></div>
<div style="position:absolute;right:971.00px;top:470.74px;font-size:28.5px;line-height:32.77px;font-weight:bold;color:#000;letter-spacing:-0.5px;white-space:nowrap;">G01 Suunnittelulupa</div>
<svg style="left:0;top:0" width="1" height="1"><polygon points="1634.8,523 1787.7,523 1787.7,570.5 1770.5,556.2 1650.8,556.2 1634.8,570.5" fill="#d6d6d6"/></svg>
<div style="position:absolute;left:1650.8px;top:523px;width:119.70000000000005px;height:8.5px;background:linear-gradient(#f0b440,#e09a28);"></div>
<div style="position:absolute;left:1650.8px;top:531.5px;width:119.70000000000005px;height:24.700000000000045px;background:linear-gradient(#0b6a10,#0a6010 30%,#075208 55%,#033a04 80%,#023002);"></div>
<div style="position:absolute;right:952.40px;top:526.24px;font-size:28.5px;line-height:32.77px;font-weight:bold;color:#000;letter-spacing:-0.5px;white-space:nowrap;">Suunnittelu</div>
<div style="position:absolute;left:1778.3px;top:580.4px;width:3px;height:33.10000000000002px;background:linear-gradient(90deg,#2a8a3a,#40ee66 50%,#2aa04a);"></div>
<div style="position:absolute;right:825.30px;top:582.94px;font-size:28.5px;line-height:32.77px;font-weight:bold;color:#000;letter-spacing:-0.5px;white-space:nowrap;">G02 Toteutuslupa</div>
<svg style="left:0;top:0" width="1" height="1"><polygon points="1849,636.8 2016.4,636.8 2016.4,685 2000,670.2 1865.8,670.2 1849,685" fill="#d6d6d6"/></svg>
<div style="position:absolute;left:1865.8px;top:636.8px;width:134.20000000000005px;height:8.5px;background:linear-gradient(#f0b440,#e09a28);"></div>
<div style="position:absolute;left:1865.8px;top:645.3px;width:134.20000000000005px;height:24.90000000000009px;background:linear-gradient(#0b6a10,#0a6010 30%,#075208 55%,#033a04 80%,#023002);"></div>
<div style="position:absolute;right:739.00px;top:640.44px;font-size:28.5px;line-height:32.77px;font-weight:bold;color:#000;letter-spacing:-0.5px;white-space:nowrap;">Toteutuspaketti 1</div>
<svg style="left:0;top:0" width="1" height="1"><polygon points="2013.7,693.8 2240.9,693.8 2240.9,742.7 2224.6,728.5 2030.8,728.5 2013.7,742.7" fill="#d6d6d6"/></svg>
<div style="position:absolute;left:2030.8px;top:693.8px;width:193.79999999999995px;height:8.5px;background:linear-gradient(#f0b440,#e09a28);"></div>
<div style="position:absolute;left:2030.8px;top:702.3px;width:193.79999999999995px;height:26.200000000000045px;background:linear-gradient(#e2d800 0%,#e0d600 30%,#cfc200 36%,#cdbf00 62%,#b2a400 68%,#ac9e00 100%);"></div>
<div style="position:absolute;right:572.00px;top:697.44px;font-size:28.5px;line-height:32.77px;font-weight:bold;color:#000;letter-spacing:-0.5px;white-space:nowrap;">Toteutuspaketti 2</div>
<svg style="left:0;top:0" width="1" height="1"><polygon points="2241.7,751.6 2396.4,751.6 2396.4,800.5 2380,785.5 2258.8,785.5 2241.7,800.5" fill="#d6d6d6"/></svg>
<div style="position:absolute;left:2258.8px;top:751.6px;width:121.19999999999982px;height:8.5px;background:linear-gradient(#f0b440,#e09a28);"></div>
<div style="position:absolute;left:2258.8px;top:760.1px;width:121.19999999999982px;height:25.399999999999977px;background:linear-gradient(#d2d2d2 0%,#cdcdcd 36%,#c2c2c2 42%,#c0c0c0 64%,#b3b3b3 70%,#afafaf 100%);"></div>
<div style="position:absolute;right:345.50px;top:754.44px;font-size:28.5px;line-height:32.77px;font-weight:bold;color:#000;letter-spacing:-0.5px;white-space:nowrap;">Toteutuspaketti 3</div>
<svg style="left:0;top:0" width="1" height="1"><polygon points="2201.8,809.4 2396.4,809.4 2396.4,858 2380,842.5 2218,842.5 2201.8,858" fill="#d6d6d6"/></svg>
<div style="position:absolute;left:2218px;top:809.4px;width:162px;height:8.5px;background:linear-gradient(#f0b440,#e09a28);"></div>
<div style="position:absolute;left:2218px;top:817.9px;width:162px;height:24.600000000000023px;background:linear-gradient(#d2d2d2 0%,#cdcdcd 36%,#c2c2c2 42%,#c0c0c0 64%,#b3b3b3 70%,#afafaf 100%);"></div>
<div style="position:absolute;right:385.00px;top:811.44px;font-size:28.5px;line-height:32.77px;font-weight:bold;color:#000;letter-spacing:-0.5px;white-space:nowrap;">Integraatiot</div>
<div style="position:absolute;left:2212.6px;top:866px;width:98.40000000000009px;height:33.60000000000002px;background:#d4d4d4;"></div>
<div style="position:absolute;left:2229px;top:866px;width:66px;height:8.5px;background:linear-gradient(#c8daf6,#a9c4ee);"></div>
<div style="position:absolute;left:2229px;top:874.5px;width:66px;height:25.100000000000023px;background:linear-gradient(#ffd46a,#ffc63c 60%,#ffbf2a);"></div>
<div style="position:absolute;right:374.00px;top:871.04px;font-size:26px;line-height:29.9px;font-weight:normal;color:#111;letter-spacing:-0.45px;white-space:nowrap;">Basware integratio</div>
<div style="position:absolute;left:2237.6px;top:923.8px;width:107.40000000000009px;height:33.200000000000045px;background:#d4d4d4;"></div>
<div style="position:absolute;left:2254.7px;top:923.8px;width:74.0px;height:8.5px;background:linear-gradient(#c8daf6,#a9c4ee);"></div>
<div style="position:absolute;left:2254.7px;top:932.3px;width:74.0px;height:24.700000000000045px;background:#22ee55;"></div>
<div style="position:absolute;right:348.50px;top:928.24px;font-size:26px;line-height:29.9px;font-weight:normal;color:#111;letter-spacing:-0.45px;white-space:nowrap;">Aditro integraatio</div>
<div style="position:absolute;left:2272px;top:981.5px;width:84.5px;height:33.10000000000002px;background:#d4d4d4;"></div>
<div style="position:absolute;left:2288.5px;top:981.5px;width:51.80000000000018px;height:8.5px;background:linear-gradient(#c8daf6,#a9c4ee);"></div>
<div style="position:absolute;left:2288.5px;top:990.0px;width:51.80000000000018px;height:24.600000000000023px;background:linear-gradient(#ffd46a,#ffc63c 60%,#ffbf2a);"></div>
<div style="position:absolute;right:314.70px;top:985.24px;font-size:26px;line-height:29.9px;font-weight:normal;color:#111;letter-spacing:-0.45px;white-space:nowrap;">Visma Integraatio</div>
<div style="position:absolute;left:2220.7px;top:1036px;width:170.0px;height:33px;background:#d4d4d4;"></div>
<div style="position:absolute;left:2237.2px;top:1036px;width:136.4000000000001px;height:8.5px;background:linear-gradient(#c8daf6,#a9c4ee);"></div>
<div style="position:absolute;left:2237.2px;top:1044.5px;width:136.4000000000001px;height:24.5px;background:linear-gradient(#ffd46a,#ffc63c 60%,#ffbf2a);"></div>
<div style="position:absolute;right:365.60px;top:1040.24px;font-size:26px;line-height:29.9px;font-weight:normal;color:#111;letter-spacing:-0.45px;white-space:nowrap;">ERP integraatio</div>
<div style="position:absolute;left:2392.9px;top:1093.8px;width:33.8px;height:8.5px;background:linear-gradient(#f0b440,#e09a28);"></div>
<div style="position:absolute;left:2392.9px;top:1102.3px;width:33.8px;height:24.7px;background:linear-gradient(#d2d2d2 0%,#cdcdcd 36%,#c2c2c2 42%,#c0c0c0 64%,#b3b3b3 70%,#afafaf 100%);"></div>
<div style="position:absolute;right:210.00px;top:1095.94px;font-size:28.5px;line-height:32.77px;font-weight:bold;color:#000;letter-spacing:-0.5px;white-space:nowrap;">Hyväksymistestaus</div>
<div style="position:absolute;left:2426.4px;top:1151.4px;width:3px;height:33.399999999999864px;background:linear-gradient(90deg,#2a8a3a,#40ee66 50%,#2aa04a);"></div>
<div style="position:absolute;right:176.70px;top:1153.44px;font-size:28.5px;line-height:32.77px;font-weight:bold;color:#000;letter-spacing:-0.5px;white-space:nowrap;">G03 Käyttöönottolupa</div>
<svg style="left:0;top:0" width="1" height="1"><polygon points="2427,1208.6 2469.5,1208.6 2469.5,1256.7 2461.2,1243 2435,1243 2427,1256.7" fill="#d6d6d6"/></svg>
<div style="position:absolute;left:2435px;top:1208.6px;width:26.199999999999818px;height:8.5px;background:linear-gradient(#f0b440,#e09a28);"></div>
<div style="position:absolute;left:2435px;top:1217.1px;width:26.199999999999818px;height:25.90000000000009px;background:linear-gradient(#d2d2d2 0%,#cdcdcd 36%,#c2c2c2 42%,#c0c0c0 64%,#b3b3b3 70%,#afafaf 100%);"></div>
<div style="position:absolute;right:168.60px;top:1210.94px;font-size:28.5px;line-height:32.77px;font-weight:bold;color:#000;letter-spacing:-0.5px;white-space:nowrap;">Käyttöönotto</div>
<div style="position:absolute;left:2478.0px;top:1322.9px;width:3px;height:33.799999999999955px;background:linear-gradient(90deg,#2a8a3a,#40ee66 50%,#2aa04a);"></div>
<div style="position:absolute;right:125.70px;top:1325.44px;font-size:28.5px;line-height:32.77px;font-weight:bold;color:#000;letter-spacing:-0.5px;white-space:nowrap;">G04 Projektin sulkeminen</div>
<div style="position:absolute;left:2167.8px;top:458px;width:4px;height:1134px;background:#eeaa00;"></div>
<svg style="left:0;top:0;" width="1" height="1"><path d="M2480.39,133.11 L2481.02,129.35 L2486.38,129.35 L2487.01,133.11 L2486.99,133.10 L2486.97,133.10 L2490.08,130.89 L2493.86,134.67 L2491.65,137.78 L2491.65,137.76 L2491.64,137.74 L2495.40,138.37 L2495.40,143.73 L2491.64,144.36 L2491.65,144.34 L2491.65,144.32 L2493.86,147.43 L2490.08,151.21 L2486.97,149.00 L2486.99,149.00 L2487.01,148.99 L2486.38,152.75 L2481.02,152.75 L2480.39,148.99 L2480.41,149.00 L2480.43,149.00 L2477.32,151.21 L2473.54,147.43 L2475.75,144.32 L2475.75,144.34 L2475.76,144.36 L2472.00,143.73 L2472.00,138.37 L2475.76,137.74 L2475.75,137.76 L2475.75,137.78 L2473.54,134.67 L2477.32,130.89 L2480.43,133.10 L2480.41,133.10 Z M2488.60,141.05 A4.9,4.9 0 1 0 2478.80,141.05 A4.9,4.9 0 1 0 2488.60,141.05 Z" fill="#000" fill-rule="evenodd"/></svg>
<svg style="left:0;top:0;" width="1" height="1"><polygon points="2515.6,137.1 2528.4,137.1 2522.0,143.7" fill="#000"/></svg>
<div style="position:absolute;left:276.7px;top:214.4px;width:24px;height:23.2px;background:#000;border-radius:3px;"></div>
<div style="position:absolute;left:280.3px;top:226.7px;width:17.2px;height:8.1px;background:#fff;"></div>
<div style="position:absolute;left:281.2px;top:217.6px;width:4.5px;height:4.5px;background:#fff;"></div>
<svg style="left:0;top:0;" width="1" height="1"><path d="M335.79,217.76 L336.42,214.00 L341.78,214.00 L342.41,217.76 L342.39,217.75 L342.37,217.75 L345.48,215.54 L349.26,219.32 L347.05,222.43 L347.05,222.41 L347.04,222.39 L350.80,223.02 L350.80,228.38 L347.04,229.01 L347.05,228.99 L347.05,228.97 L349.26,232.08 L345.48,235.86 L342.37,233.65 L342.39,233.65 L342.41,233.64 L341.78,237.40 L336.42,237.40 L335.79,233.64 L335.81,233.65 L335.83,233.65 L332.72,235.86 L328.94,232.08 L331.15,228.97 L331.15,228.99 L331.16,229.01 L327.40,228.38 L327.40,223.02 L331.16,222.39 L331.15,222.41 L331.15,222.43 L328.94,219.32 L332.72,215.54 L335.83,217.75 L335.81,217.75 Z M344.10,225.70 A5.0,5.0 0 1 0 334.10,225.70 A5.0,5.0 0 1 0 344.10,225.70 Z" fill="#000" fill-rule="evenodd"/></svg>
<svg style="left:0;top:0;" width="1" height="1"><path d="M378.5,217.8 L391,217.8 A9.6,9.6 0 0 1 391,237 L384,237" fill="none" stroke="#000" stroke-width="3.4"/><polygon points="376.6,237.2 385.5,230.5 385.5,244" fill="#000"/></svg>
<svg style="left:0;top:0;" width="1" height="1"><polygon points="433.7,222 447.3,222 440.5,229" fill="#000"/></svg>
<svg style="left:0;top:0;" width="1" height="1"><polygon points="1098.5,223 1112.1,223 1105.3,230" fill="#000"/></svg>
<svg style="left:0;top:0;" width="1" height="1"><rect x="61.5" y="299.6" width="19.1" height="16" rx="4" fill="#000"/><rect x="57.8" y="304.8" width="3.2" height="6.6" rx="1.2" fill="#000"/><rect x="81.2" y="304.8" width="3.2" height="6.6" rx="1.2" fill="#000"/><rect x="69.6" y="296" width="2.8" height="4" rx="1" fill="#000"/><rect x="65.2" y="304.6" width="3" height="3" fill="#fff"/><rect x="73.9" y="304.6" width="3" height="3" fill="#fff"/><path d="M65.8,311.6 H76.4" stroke="#888" stroke-width="1.2" stroke-dasharray="2,1.6"/></svg>
<svg style="left:0;top:0;" width="1" height="1"><polygon points="132.1,300.8 145.29999999999998,300.8 138.7,307.3" fill="#000"/></svg>
<svg style="left:0;top:0;" width="1" height="1"><rect x="218.8" y="296.8" width="7" height="7" fill="none" stroke="#000" stroke-width="2.2"/><path d="M228.8,306 L237,314.2 M229.5,314.6 L237.4,314.6 L237.4,306.8" fill="none" stroke="#000" stroke-width="2.4"/></svg>
<svg style="left:0;top:0;" width="1" height="1"><path d="M280.5,315.2 L280.8,308.6 L296.4,293 L302.9,299.5 L287.3,315.1 Z" fill="#fff"/><path d="M294.2,295.2 L300.8,301.8" stroke="#5cb85c" stroke-width="2"/></svg>
<svg style="left:0;top:0;" width="1" height="1"><path d="M1258.5,302 V295.7 H1265 M1272.5,295.7 H1279 V302 M1279,306.5 V312.8 H1272.5 M1265,312.8 H1258.5 V306.5" fill="none" stroke="#111" stroke-width="2.6"/></svg>
<svg style="left:0;top:0;" width="1" height="1"><circle cx="1325" cy="301.7" r="10" fill="none" stroke="#111" stroke-width="2.2"/><path d="M1319.5,301.7 H1330.5 M1325,296.2 V307.2" stroke="#111" stroke-width="2.2"/><path d="M1332.3,309 L1339.5,316.2" stroke="#111" stroke-width="3.2" stroke-linecap="round"/></svg>
<svg style="left:0;top:0;" width="1" height="1"><circle cx="1384.5" cy="301.7" r="10" fill="none" stroke="#111" stroke-width="2.2"/><path d="M1379,301.7 H1390" stroke="#111" stroke-width="2.2"/><path d="M1391.8,309 L1399,316.2" stroke="#111" stroke-width="3.2" stroke-linecap="round"/></svg>
<svg style="left:0;top:0;" width="1" height="1"><path d="M1434.5,300 V298.5 A3,3 0 0 1 1437.5,295.7 H1439.5 M1451,295.7 H1453 A3,3 0 0 1 1456,298.5 V300 M1456,307 V309 A3,3 0 0 1 1453,312 H1451 M1439.5,312 H1437.5 A3,3 0 0 1 1434.5,309 V307" fill="none" stroke="#111" stroke-width="2.4"/><rect x="1439" y="299.5" width="12.5" height="8.5" fill="#000"/></svg>
<svg style="left:0;top:0;" width="1" height="1"><path d="M1496,300 H1510 A6,6 0 0 1 1510,312 H1506" fill="none" stroke="#8a8a8a" stroke-width="2"/><path d="M1500.5,295.5 L1495.5,300 L1500.5,304.5" fill="none" stroke="#8a8a8a" stroke-width="2"/></svg>
<svg style="left:0;top:0;" width="1" height="1"><path d="M1565,292.5 H1555.2 V312.3 H1574.5 V304" fill="none" stroke="#000" stroke-width="3.2"/><path d="M1563,306 V302 A6,6 0 0 1 1569,296 H1574" fill="none" stroke="#000" stroke-width="3"/><polygon points="1573,290.5 1579.5,296 1573,301.5" fill="#000"/></svg>
<svg style="left:0;top:0;" width="1" height="1"><circle cx="99.8" cy="430.2" r="9" fill="none" stroke="#000" stroke-width="2.6"/><path d="M106.6,437.0 L113.8,444.0" stroke="#000" stroke-width="3.2" stroke-linecap="round"/></svg>
<svg style="left:0;top:0;" width="1" height="1"><circle cx="603.8" cy="430.2" r="9" fill="none" stroke="#000" stroke-width="2.6"/><path d="M610.5999999999999,437.0 L617.8,444.0" stroke="#000" stroke-width="3.2" stroke-linecap="round"/></svg>
<svg style="left:0;top:0;" width="1" height="1"><circle cx="942.3" cy="430.2" r="9" fill="none" stroke="#000" stroke-width="2.6"/><path d="M949.0999999999999,437.0 L956.3,444.0" stroke="#000" stroke-width="3.2" stroke-linecap="round"/></svg>
<svg style="left:0;top:0;" width="1" height="1"><polygon points="536.7,353.6 566.7,353.6 566.7,359 555.4000000000001,370.8 555.4000000000001,383.4 547.8000000000001,383.4 547.8000000000001,370.8 536.7,359" fill="#8e8e8e"/></svg>
<svg style="left:0;top:0;" width="1" height="1"><polygon points="877.4,353.6 907.4,353.6 907.4,359 896.1,370.8 896.1,383.4 888.5,383.4 888.5,370.8 877.4,359" fill="#8e8e8e"/></svg>
<svg style="left:0;top:0;" width="1" height="1"><polygon points="1178.3,353.6 1208.3,353.6 1208.3,359 1197.0,370.8 1197.0,383.4 1189.3999999999999,383.4 1189.3999999999999,370.8 1178.3,359" fill="#8e8e8e"/></svg>
<svg style="left:0;top:0;" width="1" height="1"><circle cx="36.9" cy="480.9" r="2.2" fill="#000"/><circle cx="36.9" cy="489.1" r="2.2" fill="#000"/><circle cx="36.9" cy="497.6" r="2.2" fill="#000"/><circle cx="43.6" cy="480.9" r="2.2" fill="#000"/><circle cx="43.6" cy="489.1" r="2.2" fill="#000"/><circle cx="43.6" cy="497.6" r="2.2" fill="#000"/></svg>
<svg style="left:0;top:0;" width="1" height="1"><polygon points="92.6,478.4 100.6,486.5 92.6,494.6" fill="#6a6a6a"/></svg>
<svg style="left:0;top:0;" width="1" height="1"><circle cx="36.9" cy="537.97" r="2.2" fill="#000"/><circle cx="36.9" cy="546.1700000000001" r="2.2" fill="#000"/><circle cx="36.9" cy="554.6700000000001" r="2.2" fill="#000"/><circle cx="43.6" cy="537.97" r="2.2" fill="#000"/><circle cx="43.6" cy="546.1700000000001" r="2.2" fill="#000"/><circle cx="43.6" cy="554.6700000000001" r="2.2" fill="#000"/></svg>
<svg style="left:0;top:0;" width="1" height="1"><polygon points="92.6,535.47 100.6,543.57 92.6,551.6700000000001" fill="#6a6a6a"/></svg>
<svg style="left:0;top:0;" width="1" height="1"><circle cx="36.9" cy="595.04" r="2.2" fill="#000"/><circle cx="36.9" cy="603.24" r="2.2" fill="#000"/><circle cx="36.9" cy="611.74" r="2.2" fill="#000"/><circle cx="43.6" cy="595.04" r="2.2" fill="#000"/><circle cx="43.6" cy="603.24" r="2.2" fill="#000"/><circle cx="43.6" cy="611.74" r="2.2" fill="#000"/></svg>
<svg style="left:0;top:0;" width="1" height="1"><polygon points="92.6,592.54 100.6,600.64 92.6,608.74" fill="#6a6a6a"/></svg>
<svg style="left:0;top:0;" width="1" height="1"><circle cx="36.9" cy="652.11" r="2.2" fill="#000"/><circle cx="36.9" cy="660.3100000000001" r="2.2" fill="#000"/><circle cx="36.9" cy="668.8100000000001" r="2.2" fill="#000"/><circle cx="43.6" cy="652.11" r="2.2" fill="#000"/><circle cx="43.6" cy="660.3100000000001" r="2.2" fill="#000"/><circle cx="43.6" cy="668.8100000000001" r="2.2" fill="#000"/></svg>
<svg style="left:0;top:0;" width="1" height="1"><polygon points="92.6,649.61 100.6,657.71 92.6,665.8100000000001" fill="#6a6a6a"/></svg>
<svg style="left:0;top:0;" width="1" height="1"><circle cx="36.9" cy="709.18" r="2.2" fill="#000"/><circle cx="36.9" cy="717.38" r="2.2" fill="#000"/><circle cx="36.9" cy="725.88" r="2.2" fill="#000"/><circle cx="43.6" cy="709.18" r="2.2" fill="#000"/><circle cx="43.6" cy="717.38" r="2.2" fill="#000"/><circle cx="43.6" cy="725.88" r="2.2" fill="#000"/></svg>
<svg style="left:0;top:0;" width="1" height="1"><polygon points="92.6,706.68 100.6,714.78 92.6,722.88" fill="#6a6a6a"/></svg>
<svg style="left:0;top:0;" width="1" height="1"><circle cx="36.9" cy="766.25" r="2.2" fill="#000"/><circle cx="36.9" cy="774.45" r="2.2" fill="#000"/><circle cx="36.9" cy="782.95" r="2.2" fill="#000"/><circle cx="43.6" cy="766.25" r="2.2" fill="#000"/><circle cx="43.6" cy="774.45" r="2.2" fill="#000"/><circle cx="43.6" cy="782.95" r="2.2" fill="#000"/></svg>
<svg style="left:0;top:0;" width="1" height="1"><polygon points="92.6,763.75 100.6,771.85 92.6,779.95" fill="#6a6a6a"/></svg>
<svg style="left:0;top:0;" width="1" height="1"><circle cx="36.9" cy="823.32" r="2.2" fill="#000"/><circle cx="36.9" cy="831.5200000000001" r="2.2" fill="#000"/><circle cx="36.9" cy="840.0200000000001" r="2.2" fill="#000"/><circle cx="43.6" cy="823.32" r="2.2" fill="#000"/><circle cx="43.6" cy="831.5200000000001" r="2.2" fill="#000"/><circle cx="43.6" cy="840.0200000000001" r="2.2" fill="#000"/></svg>
<svg style="left:0;top:0;" width="1" height="1"><polygon points="90.5,822.9200000000001 107,822.9200000000001 98.75,831.9200000000001" fill="#000"/></svg>
<svg style="left:0;top:0;" width="1" height="1"><circle cx="36.9" cy="880.39" r="2.2" fill="#000"/><circle cx="36.9" cy="888.59" r="2.2" fill="#000"/><circle cx="36.9" cy="897.09" r="2.2" fill="#000"/><circle cx="43.6" cy="880.39" r="2.2" fill="#000"/><circle cx="43.6" cy="888.59" r="2.2" fill="#000"/><circle cx="43.6" cy="897.09" r="2.2" fill="#000"/></svg>
<svg style="left:0;top:0;" width="1" height="1"><path d="M549.8,877.99 V876.99 A3,3 0 0 1 552.8,874.09 H561 A3,3 0 0 1 564,877.09 V887.49 A3,3 0 0 1 561,890.49 H552.8 A3,3 0 0 1 549.8,887.49 V886.49" fill="none" stroke="#5a8fc6" stroke-width="2"/><path d="M543,882.39 H557.5 M554,878.09 L558.3,882.39 L554,886.69" fill="none" stroke="#5a8fc6" stroke-width="2.1" stroke-linecap="round" stroke-linejoin="round"/></svg>
<svg style="left:0;top:0;" width="1" height="1"><circle cx="36.9" cy="937.4599999999999" r="2.2" fill="#000"/><circle cx="36.9" cy="945.66" r="2.2" fill="#000"/><circle cx="36.9" cy="954.16" r="2.2" fill="#000"/><circle cx="43.6" cy="937.4599999999999" r="2.2" fill="#000"/><circle cx="43.6" cy="945.66" r="2.2" fill="#000"/><circle cx="43.6" cy="954.16" r="2.2" fill="#000"/></svg>
<svg style="left:0;top:0;" width="1" height="1"><path d="M549.8,935.06 V934.06 A3,3 0 0 1 552.8,931.16 H561 A3,3 0 0 1 564,934.16 V944.56 A3,3 0 0 1 561,947.56 H552.8 A3,3 0 0 1 549.8,944.56 V943.56" fill="none" stroke="#5a8fc6" stroke-width="2"/><path d="M543,939.4599999999999 H557.5 M554,935.16 L558.3,939.4599999999999 L554,943.76" fill="none" stroke="#5a8fc6" stroke-width="2.1" stroke-linecap="round" stroke-linejoin="round"/></svg>
<svg style="left:0;top:0;" width="1" height="1"><circle cx="36.9" cy="994.53" r="2.2" fill="#000"/><circle cx="36.9" cy="1002.73" r="2.2" fill="#000"/><circle cx="36.9" cy="1011.23" r="2.2" fill="#000"/><circle cx="43.6" cy="994.53" r="2.2" fill="#000"/><circle cx="43.6" cy="1002.73" r="2.2" fill="#000"/><circle cx="43.6" cy="1011.23" r="2.2" fill="#000"/></svg>
<svg style="left:0;top:0;" width="1" height="1"><path d="M549.8,992.13 V991.13 A3,3 0 0 1 552.8,988.23 H561 A3,3 0 0 1 564,991.23 V1001.63 A3,3 0 0 1 561,1004.63 H552.8 A3,3 0 0 1 549.8,1001.63 V1000.63" fill="none" stroke="#5a8fc6" stroke-width="2"/><path d="M543,996.53 H557.5 M554,992.23 L558.3,996.53 L554,1000.83" fill="none" stroke="#5a8fc6" stroke-width="2.1" stroke-linecap="round" stroke-linejoin="round"/></svg>
<svg style="left:0;top:0;" width="1" height="1"><circle cx="36.9" cy="1051.6000000000001" r="2.2" fill="#000"/><circle cx="36.9" cy="1059.8" r="2.2" fill="#000"/><circle cx="36.9" cy="1068.3" r="2.2" fill="#000"/><circle cx="43.6" cy="1051.6000000000001" r="2.2" fill="#000"/><circle cx="43.6" cy="1059.8" r="2.2" fill="#000"/><circle cx="43.6" cy="1068.3" r="2.2" fill="#000"/></svg>
<svg style="left:0;top:0;" width="1" height="1"><path d="M549.8,1049.2 V1048.2 A3,3 0 0 1 552.8,1045.3 H561 A3,3 0 0 1 564,1048.3 V1058.7 A3,3 0 0 1 561,1061.7 H552.8 A3,3 0 0 1 549.8,1058.7 V1057.7" fill="none" stroke="#5a8fc6" stroke-width="2"/><path d="M543,1053.6000000000001 H557.5 M554,1049.3 L558.3,1053.6000000000001 L554,1057.9" fill="none" stroke="#5a8fc6" stroke-width="2.1" stroke-linecap="round" stroke-linejoin="round"/></svg>
<svg style="left:0;top:0;" width="1" height="1"><circle cx="36.9" cy="1108.67" r="2.2" fill="#000"/><circle cx="36.9" cy="1116.87" r="2.2" fill="#000"/><circle cx="36.9" cy="1125.37" r="2.2" fill="#000"/><circle cx="43.6" cy="1108.67" r="2.2" fill="#000"/><circle cx="43.6" cy="1116.87" r="2.2" fill="#000"/><circle cx="43.6" cy="1125.37" r="2.2" fill="#000"/></svg>
<svg style="left:0;top:0;" width="1" height="1"><polygon points="92.6,1106.17 100.6,1114.27 92.6,1122.37" fill="#6a6a6a"/></svg>
<svg style="left:0;top:0;" width="1" height="1"><circle cx="36.9" cy="1165.7400000000002" r="2.2" fill="#000"/><circle cx="36.9" cy="1173.94" r="2.2" fill="#000"/><circle cx="36.9" cy="1182.44" r="2.2" fill="#000"/><circle cx="43.6" cy="1165.7400000000002" r="2.2" fill="#000"/><circle cx="43.6" cy="1173.94" r="2.2" fill="#000"/><circle cx="43.6" cy="1182.44" r="2.2" fill="#000"/></svg>
<svg style="left:0;top:0;" width="1" height="1"><polygon points="92.6,1163.2400000000002 100.6,1171.3400000000001 92.6,1179.44" fill="#6a6a6a"/></svg>
<svg style="left:0;top:0;" width="1" height="1"><circle cx="36.9" cy="1222.81" r="2.2" fill="#000"/><circle cx="36.9" cy="1231.0099999999998" r="2.2" fill="#000"/><circle cx="36.9" cy="1239.5099999999998" r="2.2" fill="#000"/><circle cx="43.6" cy="1222.81" r="2.2" fill="#000"/><circle cx="43.6" cy="1231.0099999999998" r="2.2" fill="#000"/><circle cx="43.6" cy="1239.5099999999998" r="2.2" fill="#000"/></svg>
<svg style="left:0;top:0;" width="1" height="1"><polygon points="92.6,1220.31 100.6,1228.4099999999999 92.6,1236.5099999999998" fill="#6a6a6a"/></svg>
<svg style="left:0;top:0;" width="1" height="1"><circle cx="36.9" cy="1279.88" r="2.2" fill="#000"/><circle cx="36.9" cy="1288.08" r="2.2" fill="#000"/><circle cx="36.9" cy="1296.58" r="2.2" fill="#000"/><circle cx="43.6" cy="1279.88" r="2.2" fill="#000"/><circle cx="43.6" cy="1288.08" r="2.2" fill="#000"/><circle cx="43.6" cy="1296.58" r="2.2" fill="#000"/></svg>
<svg style="left:0;top:0;" width="1" height="1"><polygon points="92.6,1277.38 100.6,1285.48 92.6,1293.58" fill="#6a6a6a"/></svg>
<svg style="left:0;top:0;" width="1" height="1"><circle cx="36.9" cy="1336.95" r="2.2" fill="#000"/><circle cx="36.9" cy="1345.1499999999999" r="2.2" fill="#000"/><circle cx="36.9" cy="1353.6499999999999" r="2.2" fill="#000"/><circle cx="43.6" cy="1336.95" r="2.2" fill="#000"/><circle cx="43.6" cy="1345.1499999999999" r="2.2" fill="#000"/><circle cx="43.6" cy="1353.6499999999999" r="2.2" fill="#000"/></svg>
<svg style="left:0;top:0;" width="1" height="1"><polygon points="92.6,1334.45 100.6,1342.55 92.6,1350.6499999999999" fill="#6a6a6a"/></svg>
<svg style="left:0;top:0;" width="1" height="1"><circle cx="36.9" cy="1394.02" r="2.2" fill="#000"/><circle cx="36.9" cy="1402.2199999999998" r="2.2" fill="#000"/><circle cx="36.9" cy="1410.7199999999998" r="2.2" fill="#000"/><circle cx="43.6" cy="1394.02" r="2.2" fill="#000"/><circle cx="43.6" cy="1402.2199999999998" r="2.2" fill="#000"/><circle cx="43.6" cy="1410.7199999999998" r="2.2" fill="#000"/></svg>
<div style="position:absolute;left:1223px;top:962.7px;width:11px;height:48.5px;background:#bcbcbc;"></div>
</body></html>
